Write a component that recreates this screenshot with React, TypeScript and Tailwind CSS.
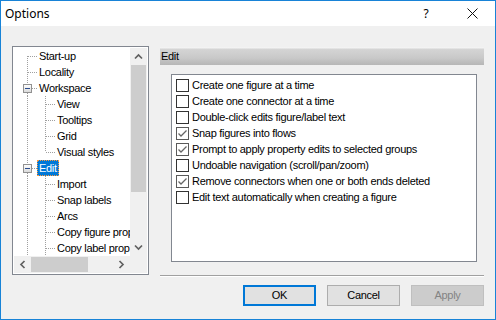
import React from "react";

type Node = {
  label: string;
  depth: number;
  expanded?: boolean;
  selected?: boolean;
  first?: boolean;
  last?: boolean;
};

const treeItems: Node[] = [
  { label: "Start-up", depth: 0, first: true },
  { label: "Locality", depth: 0 },
  { label: "Workspace", depth: 0, expanded: true },
  { label: "View", depth: 1 },
  { label: "Tooltips", depth: 1 },
  { label: "Grid", depth: 1 },
  { label: "Visual styles", depth: 1, last: true },
  { label: "Edit", depth: 0, expanded: true, selected: true },
  { label: "Import", depth: 1 },
  { label: "Snap labels", depth: 1 },
  { label: "Arcs", depth: 1 },
  { label: "Copy figure prop", depth: 1 },
  { label: "Copy label prop", depth: 1 },
];

const options = [
  { label: "Create one figure at a time", checked: false },
  { label: "Create one connector at a time", checked: false },
  { label: "Double-click edits figure/label text", checked: false },
  { label: "Snap figures into flows", checked: true },
  { label: "Prompt to apply property edits to selected groups", checked: true },
  { label: "Undoable navigation (scroll/pan/zoom)", checked: false },
  { label: "Remove connectors when one or both ends deleted", checked: true },
  { label: "Edit text automatically when creating a figure", checked: false },
];

const dot = "#a0a0a0";

function AncestorCell() {
  return (
    <svg width="18" height="16" className="shrink-0">
      <line x1="13.5" y1="0" x2="13.5" y2="16" stroke={dot} strokeDasharray="1 1" />
    </svg>
  );
}

function ConnectorCell({ node }: { node: Node }) {
  const hasBox = !!node.expanded;
  const topEnd = hasBox ? 4 : 8;
  const bottomStart = hasBox ? 13 : 8;
  return (
    <svg width="23" height="16" className="shrink-0">
      {!node.first && (
        <line x1="13.5" y1="0" x2="13.5" y2={topEnd} stroke={dot} strokeDasharray="1 1" />
      )}
      {!node.last && (
        <line x1="13.5" y1={bottomStart} x2="13.5" y2="16" stroke={dot} strokeDasharray="1 1" />
      )}
      <line x1={hasBox ? 18 : 14} y1="8.5" x2="23" y2="8.5" stroke={dot} strokeDasharray="1 1" />
      {hasBox && (
        <>
          <defs>
            <linearGradient id="exp" x1="0" y1="0" x2="0" y2="1">
              <stop offset="0" stopColor="#ffffff" />
              <stop offset="1" stopColor="#d8d8d8" />
            </linearGradient>
          </defs>
          <rect x="9.5" y="4.5" width="8" height="8" fill="url(#exp)" stroke="#919191" />
          <line x1="11" y1="8.5" x2="16" y2="8.5" stroke="#2b4c8c" />
        </>
      )}
    </svg>
  );
}

function TreeRow({ node }: { node: Node }) {
  return (
    <div className="flex h-[16px] items-center whitespace-nowrap">
      {node.depth > 0 && <AncestorCell />}
      <ConnectorCell node={node} />
      <span
        className={
          node.selected
            ? "h-[16px] px-[1px] flex items-center bg-[#0078d7] text-white border border-dotted border-[#ff9a3c]"
            : "h-[16px] px-[2px] flex items-center"
        }
      >
        {node.label}
      </span>
    </div>
  );
}

function Chevron({ dir }: { dir: "up" | "down" | "left" | "right" }) {
  const pts = {
    up: "5,10.5 8.5,7 12,10.5",
    down: "5,6.5 8.5,10 12,6.5",
    left: "10.5,5 7,8.5 10.5,12",
    right: "6.5,5 10,8.5 6.5,12",
  }[dir];
  return (
    <svg width="17" height="17" className="shrink-0">
      <polyline points={pts} fill="none" stroke="#606060" strokeWidth="1.7" />
    </svg>
  );
}

function Checkbox({ checked }: { checked: boolean }) {
  return (
    <svg width="13" height="13" className="shrink-0">
      <rect x="0.5" y="0.5" width="12" height="12" fill="#ffffff" stroke={checked ? "#5a5a5a" : "#333333"} />
      {checked && (
        <polyline points="2.5,6.5 5,9 10.5,3.5" fill="none" stroke="#666666" strokeWidth="1.3" />
      )}
    </svg>
  );
}

export default function App() {
  return (
    <div className="w-[496px] h-[320px] border border-[#1883d7] bg-[#f0f0f0] flex flex-col overflow-hidden text-black text-[11px] tracking-[-0.3px] font-['Liberation_Sans',Arial,sans-serif]">
      {/* Title bar */}
      <div className="h-[25px] shrink-0 bg-white flex items-center">
        <span className="pl-[4px] text-[12px] tracking-normal font-['Noto_Sans',sans-serif]">Options</span>
        <div className="ml-auto flex">
          <div className="w-[46px] h-[25px] flex items-center justify-center text-[12px] tracking-normal font-['Noto_Sans',sans-serif]">
            ?
          </div>
          <div className="w-[46px] h-[25px] flex items-center justify-center">
            <svg width="11" height="11">
              <path d="M0.5 0.5 L10.5 10.5 M10.5 0.5 L0.5 10.5" stroke="#111111" strokeWidth="1" />
            </svg>
          </div>
        </div>
      </div>

      {/* Body */}
      <div className="flex-1 flex flex-col">
        <div className="flex pt-[20px] pl-[11px]">
          {/* Tree */}
          <div className="w-[137px] h-[229px] border border-[#828790] bg-white p-[1px] flex flex-col shrink-0">
            <div className="flex h-[208px]">
              <div className="w-[116px] overflow-hidden">
                {treeItems.map((n) => (
                  <TreeRow key={n.label} node={n} />
                ))}
              </div>
              <div className="w-[17px] bg-[#f0f0f0] flex flex-col">
                <Chevron dir="up" />
                <div className="mx-[1px] h-[127px] bg-[#cdcdcd]" />
                <div className="flex-1" />
                <Chevron dir="down" />
              </div>
            </div>
            <div className="flex h-[17px]">
              <div className="w-[116px] bg-[#f0f0f0] flex items-center">
                <Chevron dir="left" />
                <div className="w-[57px] h-[15px] bg-[#cdcdcd]" />
                <div className="flex-1" />
                <Chevron dir="right" />
              </div>
              <div className="w-[17px] bg-[#f0f0f0]" />
            </div>
          </div>

          {/* Right panel */}
          <div className="ml-[11px] w-[324px] flex flex-col pt-[1px]">
            <div className="h-[18px] flex items-center pl-[1px] bg-[linear-gradient(to_bottom,#fafafa_0%,#d4d4d4_14%,#c9c9c9_60%,#b6b6b6_100%)]">
              Edit
            </div>
            <div className="ml-[11px] mt-[9px] w-[306px] h-[188px] border border-[#828790] bg-white pt-[2px] pl-[4px]">
              {options.map((o) => (
                <div key={o.label} className="h-[16px] flex items-center gap-[3px] whitespace-nowrap">
                  <Checkbox checked={o.checked} />
                  <span>{o.label}</span>
                </div>
              ))}
            </div>
            <div className="mt-[13px] h-[2px] border-t border-[#a0a0a0] border-b border-b-white" />
          </div>
        </div>

        {/* Buttons */}
        <div className="mt-[8px] flex justify-end gap-[11px] pr-[11px]">
          <button className="w-[73px] h-[21px] border-2 border-[#0078d7] bg-[#e1e1e1] flex items-center justify-center">
            OK
          </button>
          <button className="w-[73px] h-[21px] border border-[#adadad] bg-[#e1e1e1] flex items-center justify-center">
            Cancel
          </button>
          <button className="w-[73px] h-[21px] border border-[#bfbfbf] bg-[#cccccc] text-[#838383] flex items-center justify-center">
            Apply
          </button>
        </div>
      </div>
    </div>
  );
}
